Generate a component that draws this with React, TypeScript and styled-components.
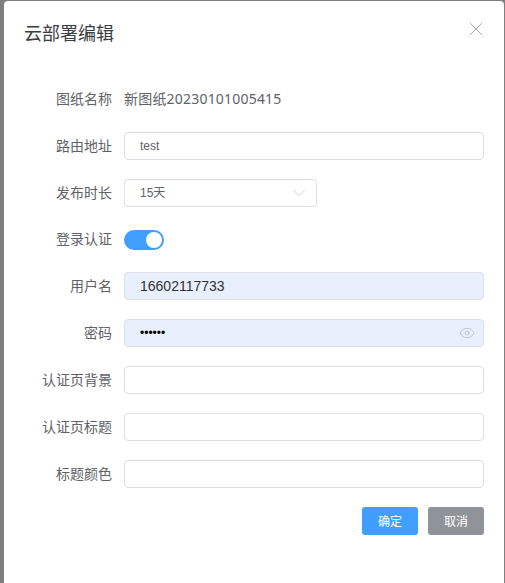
import * as React from 'react'
import styled, { createGlobalStyle } from 'styled-components'
import { ChevronDown, Eye, X } from 'lucide-react'

const GlobalStyle = createGlobalStyle`
  html, body {
    margin: 0;
    padding: 0;
    height: 100%;
    background: #7f7f7f;
    overflow: hidden;
    font-family: "Liberation Sans", "Noto Sans CJK SC", sans-serif;
  }
`

const Overlay = styled.div`
  width: 505px;
  height: 583px;
  padding: 1px 1px 0 4px;
  box-sizing: border-box;
  overflow: hidden;
`

const Dialog = styled.div`
  width: 500px;
  height: 600px;
  background: #fff;
  border-radius: 4px;
  box-sizing: border-box;
  padding: 21px 20px 0;
`

const Header = styled.div`
  display: flex;
  justify-content: space-between;
  align-items: flex-start;
  height: 63px;
`

const Title = styled.span`
  font-size: 18px;
  line-height: 24px;
  color: #3a3c40;
`

const CloseButton = styled.span`
  display: flex;
  color: #909399;
  margin: -4px -3px 0 0;
`

const Form = styled.div`
  display: flex;
  flex-direction: column;
  gap: 19px;
`

const Row = styled.div<{ $short?: boolean }>`
  display: flex;
  align-items: center;
  height: ${p => (p.$short ? 27 : 28)}px;
  gap: 12px;
`

const Label = styled.label`
  width: 88px;
  text-align: right;
  font-family: "Noto Sans CJK SC", sans-serif;
  font-size: 14px;
  line-height: 20px;
  color: #606266;
  flex: none;
  margin-top: -3px;
`

const PlainValue = styled.span`
  font-family: "Noto Sans", "Noto Sans CJK SC", sans-serif;
  font-size: 14px;
  line-height: 20px;
  letter-spacing: 0.2px;
  color: #606266;
`

const Field = styled.div<{ $filled?: boolean; $width?: number }>`
  display: flex;
  align-items: center;
  justify-content: space-between;
  box-sizing: border-box;
  width: ${p => p.$width ?? 360}px;
  height: 28px;
  padding: 0 9px 0 15px;
  border: 1px solid #dcdfe6;
  border-radius: 4px;
  background: ${p => (p.$filled ? '#e8f0fe' : '#fff')};
  font-size: ${p => (p.$filled ? 14 : 12)}px;
  color: ${p => (p.$filled ? '#303133' : '#606266')};
`

const FieldText = styled.span`
  line-height: 16px;
`

const Toggle = styled.span`
  display: flex;
  justify-content: flex-end;
  align-items: center;
  box-sizing: border-box;
  width: 40px;
  height: 20px;
  padding: 2px;
  border-radius: 10px;
  background: #409eff;
`

const Knob = styled.span`
  width: 16px;
  height: 16px;
  border-radius: 50%;
  background: #fff;
`

const Dots = styled.span`
  font-size: 12px;
  color: #000;
`

const Footer = styled.div`
  display: flex;
  justify-content: flex-end;
  gap: 10px;
  margin-top: 19px;
`

const Button = styled.button<{ $muted?: boolean }>`
  width: 56px;
  height: 28px;
  padding: 0 0 1px;
  border: 0;
  border-radius: 3px;
  background: ${p => (p.$muted ? '#909399' : '#409eff')};
  color: #fff;
  font-size: 12px;
  font-family: "Noto Sans CJK SC", sans-serif;
`

const Chevron = styled(ChevronDown)`
  margin-right: -3px;
`

const PasswordEye = styled(Eye)`
  margin-right: -1px;
`

export default function App() {
  return (
    <Overlay>
      <GlobalStyle />
      <Dialog>
        <Header>
          <Title>云部署编辑</Title>
          <CloseButton>
            <X size={22} strokeWidth={0.9} />
          </CloseButton>
        </Header>
        <Form>
          <Row>
            <Label>图纸名称</Label>
            <PlainValue>新图纸20230101005415</PlainValue>
          </Row>
          <Row>
            <Label>路由地址</Label>
            <Field>
              <FieldText>test</FieldText>
            </Field>
          </Row>
          <Row>
            <Label>发布时长</Label>
            <Field $width={193}>
              <FieldText>15天</FieldText>
              <Chevron size={22} strokeWidth={0.8} color="#c0c4cc" />
            </Field>
          </Row>
          <Row $short>
            <Label>登录认证</Label>
            <Toggle>
              <Knob />
            </Toggle>
          </Row>
          <Row>
            <Label>用户名</Label>
            <Field $filled>
              <FieldText>16602117733</FieldText>
            </Field>
          </Row>
          <Row>
            <Label>密码</Label>
            <Field $filled>
              <Dots>••••••</Dots>
              <PasswordEye size={16} strokeWidth={1.2} color="#b8bcc4" />
            </Field>
          </Row>
          <Row>
            <Label>认证页背景</Label>
            <Field />
          </Row>
          <Row>
            <Label>认证页标题</Label>
            <Field />
          </Row>
          <Row>
            <Label>标题颜色</Label>
            <Field />
          </Row>
        </Form>
        <Footer>
          <Button>确定</Button>
          <Button $muted>取消</Button>
        </Footer>
      </Dialog>
    </Overlay>
  )
}
